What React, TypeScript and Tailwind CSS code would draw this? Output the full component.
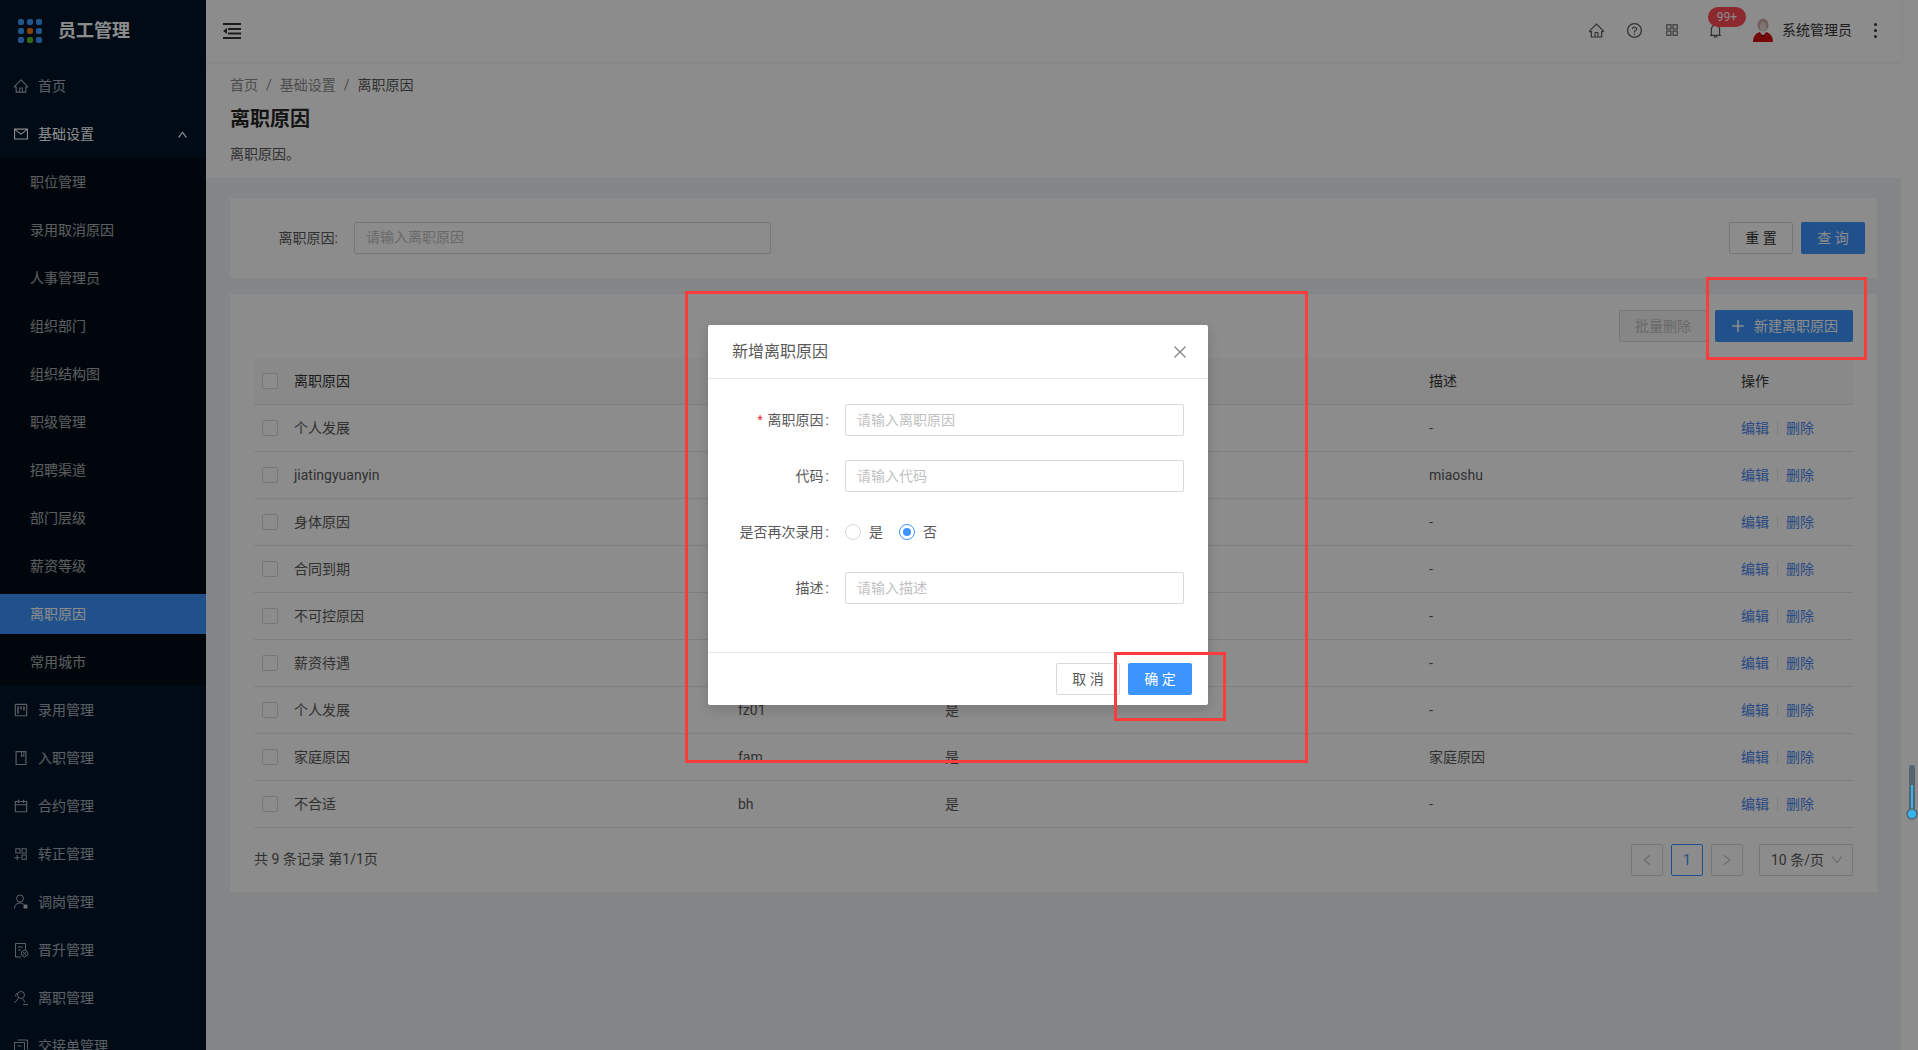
import {
  AiOutlineAppstore, AiOutlineAppstoreAdd, AiOutlineBell, AiOutlineBook, AiOutlineCalendar, AiOutlineClose,
  AiOutlineDown, AiOutlineHome, AiOutlineLeft, AiOutlineMail,
  AiOutlinePlus, AiOutlineProject, AiOutlineQuestionCircle, AiOutlineRight, AiOutlineUp,
} from 'react-icons/ai'

type IconProps = { size?: number }

function TransferIcon({ size = 16 }: IconProps) {
  return (
    <svg width={size} height={size} viewBox="0 0 16 16" fill="none" stroke="currentColor" strokeWidth="1">
      <circle cx="7" cy="4.5" r="3.5" />
      <path d="M1.5 14.5c0-3.5 2-5.5 5.5-5.5 1.5 0 2.5.4 3.5 1.2" />
      <rect x="11" y="11" width="3" height="3" fill="currentColor" />
    </svg>
  )
}

function PromoteIcon({ size = 16 }: IconProps) {
  return (
    <svg width={size} height={size} viewBox="0 0 16 16" fill="none" stroke="currentColor" strokeWidth="1">
      <path d="M8 15H2.5V1.5h10V8" />
      <path d="M5 5h5M5 8h3" />
      <circle cx="11.5" cy="11.5" r="3.2" />
      <path d="M10 10l3 3M13 10l-3 3" />
    </svg>
  )
}

function LeaveIcon({ size = 16 }: IconProps) {
  return (
    <svg width={size} height={size} viewBox="0 0 16 16" fill="none" stroke="currentColor" strokeWidth="1">
      <circle cx="8" cy="5" r="3.5" />
      <path d="M5.5 8L1.5 13M2 6.5L4 3M10 9l2 3.5" />
      <path d="M10 14.5h5" />
    </svg>
  )
}

function HandoverIcon({ size = 16 }: IconProps) {
  return (
    <svg width={size} height={size} viewBox="0 0 16 16" fill="none" stroke="currentColor" strokeWidth="1">
      <rect x="1.5" y="4.5" width="10" height="10" />
      <path d="M4.5 2h10v9.5" />
      <path d="M4.5 8h4" />
    </svg>
  )
}

function FoldIcon() {
  return (
    <svg width="18" height="16" viewBox="0 0 18 16" fill="#333">
      <rect width="18" height="2" />
      <rect x="5" y="5" width="13" height="2" />
      <rect x="5" y="9.5" width="13" height="2" />
      <rect y="14" width="18" height="2" />
      <path d="M0 8l4-3v6z" />
    </svg>
  )
}

const subMenu = ['职位管理', '录用取消原因', '人事管理员', '组织部门', '组织结构图', '职级管理', '招聘渠道', '部门层级', '薪资等级', '离职原因', '常用城市']

const bottomMenu = [
  { label: '录用管理', icon: AiOutlineProject },
  { label: '入职管理', icon: AiOutlineBook },
  { label: '合约管理', icon: AiOutlineCalendar },
  { label: '转正管理', icon: AiOutlineAppstoreAdd },
  { label: '调岗管理', icon: TransferIcon },
  { label: '晋升管理', icon: PromoteIcon },
  { label: '离职管理', icon: LeaveIcon },
  { label: '交接单管理', icon: HandoverIcon },
]

const rows = [
  { name: '个人发展', code: '', again: '', desc: '-' },
  { name: 'jiatingyuanyin', code: '', again: '', desc: 'miaoshu' },
  { name: '身体原因', code: '', again: '', desc: '-' },
  { name: '合同到期', code: '', again: '', desc: '-' },
  { name: '不可控原因', code: '', again: '', desc: '-' },
  { name: '薪资待遇', code: '', again: '', desc: '-' },
  { name: '个人发展', code: 'fz01', again: '是', desc: '-' },
  { name: '家庭原因', code: 'fam', again: '是', desc: '家庭原因' },
  { name: '不合适', code: 'bh', again: '是', desc: '-' },
]

const tableCols = 'grid grid-cols-[40px_444px_207px_484px_312px_112px] items-center'

function Logo() {
  const colors = ['#3b9dff', '#3b9dff', '#3b9dff', '#3b9dff', '#f5760f', '#3b9dff', '#3b9dff', '#58c22c', '#3b9dff']
  return (
    <div className="grid grid-cols-3 gap-[3px] w-6 h-6">
      {colors.map((c, i) => (
        <span key={i} className="rounded-[2px]" style={{ background: c }} />
      ))}
    </div>
  )
}

function Avatar() {
  return (
    <svg width="20" height="24" viewBox="0 0 20 24">
      <ellipse cx="10" cy="7" rx="5.5" ry="6.5" fill="#cbb0aa" />
      <path d="M7 9c0-3 1-5 3-5s3 2 3 5-1 4-3 4-3-1-3-4z" fill="#e8d8d2" />
      <path d="M0 24c0-6 3-9 7-10l3 3 3-3c4 1 7 4 7 10z" fill="#d40f0f" />
      <path d="M7 14l3 4 3-4z" fill="#f4f4f4" />
      <path d="M8 17h4l-2 2z" fill="#5a0a0a" />
    </svg>
  )
}

function Sidebar() {
  return (
    <aside className="w-[206px] shrink-0 h-full overflow-hidden bg-[#001529] text-sm text-white/65">
      <div className="h-[62px] flex items-center pl-[18px] gap-4">
        <Logo />
        <span className="text-lg font-bold text-white">员工管理</span>
      </div>
      <div className="h-12 flex items-center pl-[13px] gap-[9px]">
        <AiOutlineHome size={16} />
        <span>首页</span>
      </div>
      <div className="h-12 flex items-center pl-[13px] gap-[9px] text-white">
        <AiOutlineMail size={16} />
        <span>基础设置</span>
        <AiOutlineUp size={11} stroke="currentColor" strokeWidth={40} className="ml-auto mr-[18px]" />
      </div>
      <div className="bg-[#000c17]">
        {subMenu.map((label) => (
          <div key={label} className="h-12 py-1">
            <div
              className={
                label === '离职原因'
                  ? 'h-10 flex items-center pl-[30px] bg-[#3c94fd] text-white'
                  : 'h-10 flex items-center pl-[30px]'
              }
            >
              {label}
            </div>
          </div>
        ))}
      </div>
      {bottomMenu.map(({ label, icon: Icon }) => (
        <div key={label} className="h-12 flex items-center pl-[13px] gap-[9px]">
          <Icon size={16} />
          <span>{label}</span>
        </div>
      ))}
    </aside>
  )
}

function Topbar() {
  return (
    <header className="relative h-[62px] shrink-0 flex items-center bg-white pl-[17px] pr-[21px] shadow-[0_1px_4px_rgba(0,21,41,0.08)] text-[#595959]">
      <FoldIcon />
      <div className="ml-auto -mt-[2px] flex items-center">
        <span className="w-[38px] flex justify-center"><AiOutlineHome size={17} /></span>
        <span className="w-[38px] flex justify-center"><AiOutlineQuestionCircle size={17} /></span>
        <span className="w-[38px] flex justify-center"><AiOutlineAppstore size={16} /></span>
        <span className="relative w-[38px] ml-[5px] flex justify-center">
          <AiOutlineBell size={17} />
          <span className="absolute left-[12px] -top-[15px] h-5 w-[38px] rounded-full bg-[#ff4b55] text-white text-xs leading-5 text-center">99+</span>
        </span>
        <span className="ml-[19px] flex"><Avatar /></span>
        <span className="ml-[9px] text-sm text-[#333]">系统管理员</span>
        <span className="ml-[18px] w-[10px] flex flex-col items-center gap-[3px]">
          <i className="w-[3px] h-[3px] rounded-full bg-[#333]" />
          <i className="w-[3px] h-[3px] rounded-full bg-[#333]" />
          <i className="w-[3px] h-[3px] rounded-full bg-[#333]" />
        </span>
      </div>
    </header>
  )
}

function PageHeader() {
  return (
    <div className="h-[116px] shrink-0 bg-white px-6 pt-[13px]">
      <div className="flex gap-2 text-sm leading-5 text-[#8c8c8c]">
        <span>首页</span><span>/</span><span>基础设置</span><span>/</span><span className="text-[#595959]">离职原因</span>
      </div>
      <h1 className="mt-[10px] text-xl leading-7 font-bold text-[#262626]">离职原因</h1>
      <p className="mt-[11px] text-sm leading-5 text-[#595959]">离职原因。</p>
    </div>
  )
}

function SearchCard() {
  return (
    <section className="h-20 bg-white flex items-center pl-[44px] pr-3 text-sm text-[#595959]">
      <span className="w-[64px] text-right">离职原因:</span>
      <input
        readOnly
        placeholder="请输入离职原因"
        className="ml-4 w-[417px] h-8 px-[11px] pb-[2px] border border-[#d9d9d9] rounded-[2px] placeholder:text-[#bfbfbf]"
      />
      <button className="ml-auto w-16 h-8 border border-[#d9d9d9] rounded-[2px] text-[#333]">重 置</button>
      <button className="ml-2 w-16 h-8 rounded-[2px] bg-[#3c94fd] text-white">查 询</button>
    </section>
  )
}

function Checkbox() {
  return <span className="ml-2 block w-4 h-4 border border-[#d9d9d9] rounded-[2px] bg-white" />
}

function TableCard() {
  return (
    <section className="mt-4 h-[598px] bg-white px-6 text-sm text-[#595959]">
      <div className="h-[64px] pt-4 flex justify-end gap-2">
        <button className="w-[88px] h-8 border border-[#d9d9d9] rounded-[2px] bg-[#f5f5f5] text-[#bfbfbf]">批量删除</button>
        <button className="w-[138px] h-8 rounded-[2px] bg-[#3c94fd] text-white flex items-center justify-center gap-2">
          <AiOutlinePlus size={16} stroke="currentColor" strokeWidth={30} />
          新建离职原因
        </button>
      </div>
      <div className={`${tableCols} h-[47px] bg-[#fafafa] border-b border-[#e8e8e8] text-[#333]`}>
        <Checkbox />
        <span>离职原因</span>
        <span>代码</span>
        <span>是否再次录用</span>
        <span>描述</span>
        <span>操作</span>
      </div>
      {rows.map((r, i) => (
        <div key={i} className={`${tableCols} h-[47px] border-b border-[#e8e8e8]`}>
          <Checkbox />
          <span>{r.name}</span>
          <span>{r.code}</span>
          <span>{r.again}</span>
          <span>{r.desc}</span>
          <span className="flex items-center text-[#4a86f0]">
            编辑
            <i className="mx-2 w-px h-[14px] bg-[#e8e8e8]" />
            删除
          </span>
        </div>
      ))}
      <div className="h-[64px] flex items-center">
        <span className="-mt-[3px]">共 9 条记录 第1/1页</span>
        <div className="ml-auto flex items-center gap-2">
          <span className="w-8 h-8 flex items-center justify-center border border-[#d9d9d9] rounded-[2px] text-[#bfbfbf]"><AiOutlineLeft size={14} /></span>
          <span className="w-8 h-8 flex items-center justify-center border border-[#3c94fd] rounded-[2px] text-[#3c94fd]">1</span>
          <span className="w-8 h-8 flex items-center justify-center border border-[#d9d9d9] rounded-[2px] text-[#bfbfbf]"><AiOutlineRight size={14} /></span>
          <span className="ml-2 w-[94px] h-8 flex items-center pl-[11px] gap-[6px] border border-[#d9d9d9] rounded-[2px]">
            10 条/页
            <AiOutlineDown size={14} className="text-[#bfbfbf]" />
          </span>
        </div>
      </div>
    </section>
  )
}

function FormRow({ label, required, children }: { label: string; required?: boolean; children: React.ReactNode }) {
  return (
    <div className="mb-6 h-8 flex items-center text-sm text-[#595959]">
      <span className="w-[121px] flex justify-end items-center">
        {required && <span className="mr-[5px] text-xs text-[#f5222d]">*</span>}
        {label}
        <span className="ml-[2px]">:</span>
      </span>
      <div className="ml-4 w-[339px]">{children}</div>
    </div>
  )
}

function TextField({ placeholder }: { placeholder: string }) {
  return (
    <input
      readOnly
      placeholder={placeholder}
      className="block w-full h-8 px-[11px] pb-px border border-[#d9d9d9] rounded-[2px] text-sm placeholder:text-[#bfbfbf]"
    />
  )
}

function Modal() {
  return (
    <div className="absolute left-[708px] top-[325px] w-[500px] h-[380px] flex flex-col bg-white rounded-[2px] shadow-[0_4px_12px_rgba(0,0,0,0.15)]">
      <div className="h-[54px] shrink-0 flex items-center justify-between pl-6 pr-[19px] border-b border-[#e8e8e8]">
        <span className="mt-px text-base text-[#595959]">新增离职原因</span>
        <AiOutlineClose size={18} className="text-[#8c8c8c] mt-px" />
      </div>
      <div className="flex-1 pt-[25px]">
        <FormRow label="离职原因" required><TextField placeholder="请输入离职原因" /></FormRow>
        <FormRow label="代码"><TextField placeholder="请输入代码" /></FormRow>
        <FormRow label="是否再次录用">
          <div className="flex items-center">
            <span className="w-4 h-4 rounded-full border border-[#d9d9d9]" />
            <span className="ml-2">是</span>
            <span className="ml-4 w-4 h-4 rounded-full border border-[#3c94fd] flex items-center justify-center">
              <i className="w-2 h-2 rounded-full bg-[#3c94fd]" />
            </span>
            <span className="ml-2">否</span>
          </div>
        </FormRow>
        <FormRow label="描述"><TextField placeholder="请输入描述" /></FormRow>
      </div>
      <div className="h-[53px] shrink-0 flex items-center justify-end gap-2 pr-4 border-t border-[#e8e8e8] text-sm">
        <button className="w-16 h-8 border border-[#d9d9d9] rounded-[2px] text-[#595959]">取 消</button>
        <button className="w-16 h-8 rounded-[2px] bg-[#3c94fd] text-white">确 定</button>
      </div>
    </div>
  )
}

export default function App() {
  return (
    <div className="relative w-[1918px] h-[1050px] overflow-hidden flex bg-white font-['Roboto','Noto_Sans_CJK_SC',sans-serif]">
      <Sidebar />
      <main className="w-[1695px] shrink-0 h-full flex flex-col bg-[#f0f2f5]">
        <Topbar />
        <PageHeader />
        <div className="px-6 pt-5">
          <SearchCard />
          <TableCard />
        </div>
      </main>

      {/* mask + dialog */}
      <div className="absolute inset-0 bg-black/45" />
      <Modal />

      {/* scroll widget on the right edge */}
      <svg className="absolute left-[1906px] top-[764px]" width="12" height="58" viewBox="0 0 12 58">
        <rect x="3" y="1" width="6" height="48" rx="3" fill="#55636f" />
        <rect x="5" y="21" width="2" height="28" fill="#35b5ee" />
        <circle cx="6" cy="50" r="5" fill="#35b5ee" stroke="#55636f" strokeWidth="1.5" />
      </svg>

      {/* red annotation boxes */}
      <div className="absolute left-[685px] top-[291px] w-[623px] h-[472px] border-[3px] border-[#ff3b3b]" />
      <div className="absolute left-[1114px] top-[652px] w-[112px] h-[69px] border-[3px] border-[#ff3b3b]" />
      <div className="absolute left-[1706px] top-[277px] w-[161px] h-[83px] border-[3px] border-[#ff3b3b]" />
    </div>
  )
}
